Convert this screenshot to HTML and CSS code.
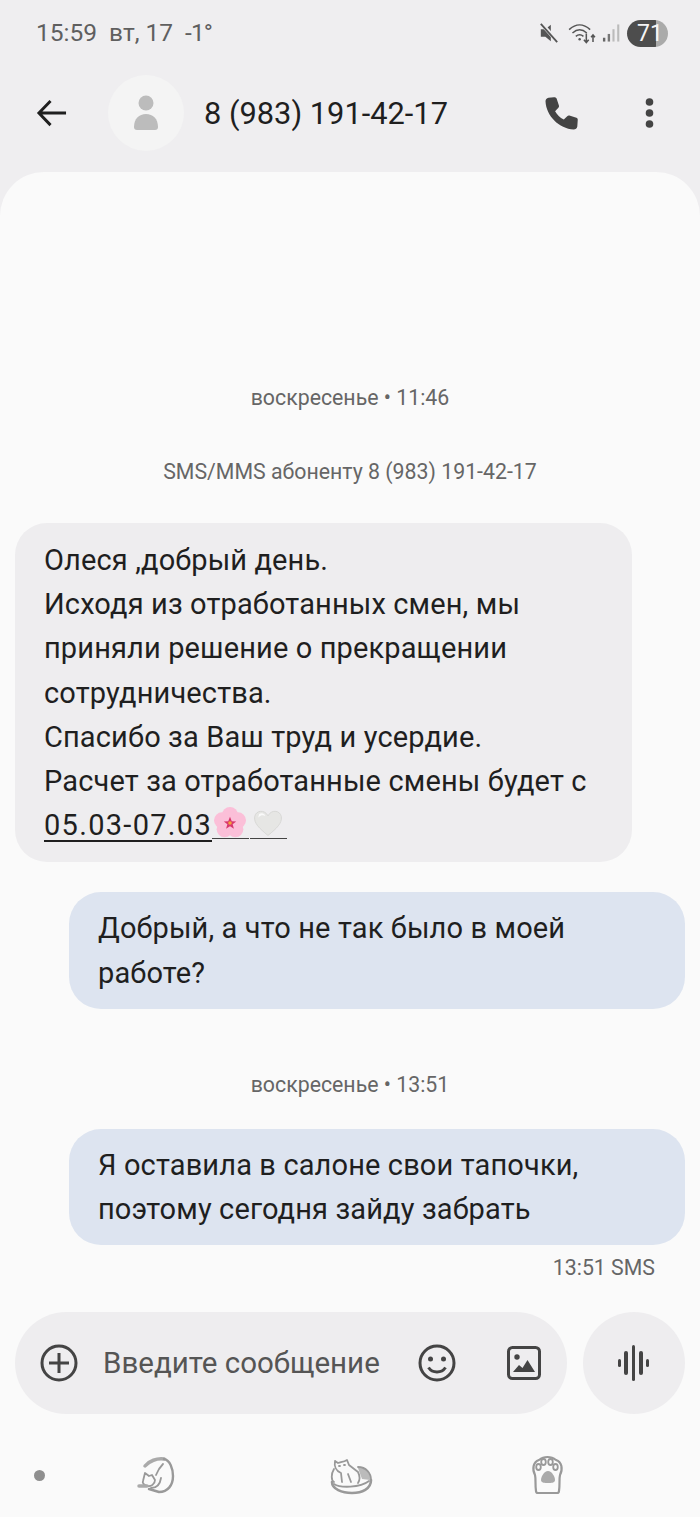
FILE: index.html
```html
<!DOCTYPE html>
<html lang="ru">
<head>
    <meta charset="UTF-8">
    <meta name="viewport" content="width=device-width, initial-scale=1.0">
    <title>8 (983) 191-42-17</title>
    <link rel="stylesheet" href="styles.css">
</head>
<body>
    <div class="phone">
        <div class="status">
            <div class="status-left">
                <span class="clock">15:59</span>
                <span class="date">вт, 17</span>
                <span class="temp">-1°</span>
            </div>
            <div class="status-right">
                <svg class="ic-mute" viewBox="0 0 22 22"><path d="M2 7h5l6-5v18l-6-5H2z" fill="#555"/><path d="M3 1l17 19" stroke="#efeef0" stroke-width="4.5"/><path d="M2 1l18 20" stroke="#555" stroke-width="2"/></svg>
                <svg class="ic-wifi" viewBox="0 0 30 22" fill="none" stroke="#555" stroke-width="1.6"><path d="M1 7c7-6.500 15-6.500 22 0M4.500 10.500c5-4.500 10-4.500 15 0M8 14c3-2.500 5-2.500 8 0"/><circle cx="12" cy="17" r="1.300" fill="#555" stroke="none"/><path d="M19 11v9M16.500 17.500l2.500 3 2.500-3M26 20v-7M24 15l2-2.500 2 2.500"/></svg>
                <svg class="ic-signal" viewBox="0 0 20 20"><rect x="1" y="15" width="2.500" height="4" fill="#666"/><rect x="6" y="11" width="2.500" height="8" fill="#777"/><rect x="11" y="6" width="2.200" height="13" fill="#bbb"/><rect x="16" y="1" width="2.200" height="18" fill="#bbb"/></svg>
                <div class="battery"><span>71</span></div>
            </div>
        </div>

        <header class="topbar">
            <svg class="ic-back" viewBox="0 0 32 32" fill="none" stroke="#1f1f1f" stroke-width="3"><path d="M31 15.500H3M15 3L3 15.500 15 28"/></svg>
            <div class="avatar">
                <svg viewBox="0 0 26 36" width="26" height="36" fill="#bcbcbc"><circle cx="13" cy="8" r="7.500"/><path d="M1 32c0-8 5-13 12-13s12 5 12 13c0 2-1 3-3 3H4c-2 0-3-1-3-3z"/></svg>
            </div>
            <div class="title">8 (983) 191-42-17</div>
            <svg class="ic-phone" viewBox="0 0 24 24"><path fill="#444" d="M6.600 1.500L3 1.800C1.800 2 1 3 1 4.200 1.500 14 10 22.500 19.800 23c1.200 0 2.200-.8 2.400-2l.3-4.500c0-.6-.3-1.100-.9-1.300l-4.700-1.500c-.5-.1-1 0-1.400.4l-2.300 2.300C10.500 15 8.800 13.300 7.400 10.800l2.200-2.300c.4-.4.500-.9.400-1.400L8.400 2.400c-.2-.6-1.100-.9-1.800-.9z"/></svg>
            <svg class="ic-more" viewBox="0 0 8 32" fill="#444"><circle cx="4" cy="5" r="3.800"/><circle cx="4" cy="16" r="3.800"/><circle cx="4" cy="27" r="3.800"/></svg>
        </header>

        <main class="sheet">
            <div class="meta meta-first">воскресенье • 11:46</div>
            <div class="meta meta-sms">SMS/MMS абоненту 8 (983) 191-42-17</div>

            <div class="bubble incoming">Олеся ,добрый день.<br>Исходя из отработанных смен, мы приняли решение о прекращении сотрудничества.<br>Спасибо за Ваш труд и усердие.<br>Расчет за отработанные смены будет с <span class="link">05.03-07.03</span><span class="emoji"><svg viewBox="0 0 36 36" width="36" height="32"><g fill="#fbbfd8"><circle cx="18" cy="9" r="9"/><circle cx="27" cy="15" r="9"/><circle cx="24" cy="25" r="9"/><circle cx="12" cy="25" r="9"/><circle cx="9" cy="15" r="9"/></g><path fill="#d8386e" d="M18 11l2 5 5 .3-4 3.200 1.400 5-4.400-2.800-4.400 2.800 1.400-5-4-3.200 5-.3z"/><circle cx="18" cy="18" r="2" fill="#f4a53a"/></svg></span><span class="emoji"><svg viewBox="0 0 36 36" width="36" height="32"><path fill="#e6e6e4" stroke="#d5d5d3" d="M18 32C8 24 2 18 3 11c1-7 11-9 15-1 4-8 14-6 15 1 1 7-5 13-15 21z"/><path fill="#fafafa" d="M8 8c3-2 6-1 7 2-3-1-5-1-8 2z"/></svg></span></div>

            <div class="bubble outgoing bubble-second">Добрый, а что не так было в моей работе?</div>

            <div class="meta meta-second">воскресенье • 13:51</div>

            <div class="bubble outgoing">Я оставила в салоне свои тапочки, поэтому сегодня зайду забрать</div>
            <div class="sent">13:51 SMS</div>

            <div class="composer">
                <div class="input-pill">
                    <svg class="ic-24" viewBox="0 0 38 38" fill="none" stroke="#444" stroke-width="3"><circle cx="19" cy="19" r="17"/><path d="M19 9v20M9 19h20"/></svg>
                    <span class="placeholder">Введите сообщение</span>
                    <svg class="ic-24 ic-smile" viewBox="0 0 38 38" fill="none" stroke="#444" stroke-width="3"><circle cx="19" cy="19" r="17"/><circle cx="12.500" cy="15" r="2.500" fill="#444" stroke="none"/><circle cx="25.500" cy="15" r="2.500" fill="#444" stroke="none"/><path d="M10.500 23.500c4 6 13 6 17 0"/></svg>
                    <svg class="ic-24 ic-image" viewBox="0 0 34 34" fill="none"><rect x="1.500" y="1.500" width="31" height="31" rx="4" stroke="#444" stroke-width="3"/><circle cx="10" cy="11" r="2.700" fill="#444"/><path fill="#444" d="M6 26l6-7 3.500 3 5-8 7.500 12z"/></svg>
                </div>
                <div class="voice">
                    <svg viewBox="0 0 32 36" width="32" height="36" fill="#444"><rect x="0" y="14" width="3" height="8" rx="1.500"/><rect x="6" y="6" width="4" height="24" rx="2"/><rect x="14" y="0" width="3" height="36" rx="1.500"/><rect x="21" y="6" width="4" height="24" rx="2"/><rect x="28" y="14" width="3" height="8" rx="1.500"/></svg>
                </div>
            </div>

            <nav class="navbar">
                <span class="nav-dot"></span>
                <svg class="nav-cat" viewBox="0 0 60 60" fill="none" stroke="#999" stroke-width="1.800" stroke-linecap="round" stroke-linejoin="round">
                    <path d="M20 21C24 16 32 13 39 14" stroke="#aaa" stroke-width="3.500"/>
                    <path d="M39 14C45 15 48 24 48 31 48 40 43 47 34 47L24 44" stroke-width="2.400"/>
                    <path d="M38 19C35 22 33 25 31 30"/>
                    <path d="M18 36L20 28 24 31 27 30 30 35C30 39 26 42 22 41 19 40 17 38 18 36z"/>
                    <path d="M14 41H22" stroke="#aaa" stroke-width="3.500"/>
                    <path d="M26 43C31 43 35 40 36 33"/>
                </svg>
                <svg class="nav-bed" viewBox="0 0 60 50" fill="none" stroke="#999" stroke-width="1.800" stroke-linecap="round" stroke-linejoin="round">
                    <path d="M36 18C44 17 49 23 48 30L40 29z" fill="#bbb" stroke="none"/>
                    <path d="M12 19C9 24 9 30 12 32M36 17C44 17 49 23 49 30"/>
                    <path d="M10 32C10 39 20 43 30 43S49 39 49 30" stroke="#999" stroke-width="2.600"/>
                    <path d="M12 34C18 38 38 38 47 31"/>
                    <path d="M13 11L16 13C19 12 22 12 25 10L27 15 36 22C38 26 38 30 36 33M13 11C12 16 14 21 19 23L20 32M26 24L29 32"/>
                    <path d="M17 16H18M22 15H23"/>
                </svg>
                <svg class="nav-paw" viewBox="0 0 60 60" fill="none" stroke="#999" stroke-width="2.200" stroke-linecap="round" stroke-linejoin="round">
                    <path d="M16 46C15 40 16 34 15 30 12 24 13 17 19 15 24 11 31 11 36 15 42 17 43 24 40 30 39 34 40 40 39 46 39 47.500 38 48 37 48H18C17 48 16 47.500 16 46z"/>
                    <ellipse cx="18.500" cy="22" rx="2.300" ry="3" stroke-width="1.800"/>
                    <ellipse cx="23.500" cy="17" rx="2.300" ry="3" stroke-width="1.800"/>
                    <ellipse cx="30.500" cy="17" rx="2.300" ry="3" stroke-width="1.800"/>
                    <ellipse cx="35.500" cy="22" rx="2.300" ry="3" stroke-width="1.800"/>
                    <path d="M28 26C32 26 35 32 35 35 35 38 31 38 28 38S21 38 21 35C21 32 24 26 28 26z" fill="#aaa" stroke="none"/>
                </svg>
            </nav>
        </main>
    </div>
</body>
</html>
```

FILE: styles.css
```css
* {
    box-sizing: border-box;
}
html, body {
    margin: 0;
    padding: 0;
}
body {
    font-family: Roboto, "Noto Sans", sans-serif;
    background-color: #efeef0;
    color: #1f1f1f;
}
.phone {
    width: 700px;
    height: 1517px;
    display: flex;
    flex-direction: column;
    overflow: hidden;
}

/* status bar */
.status {
    height: 64px;
    padding: 18px 32px 0 36px;
    display: flex;
    justify-content: space-between;
    align-items: flex-start;
}
.status-left {
    display: flex;
    color: #5f5f5f;
    font-size: 24.500px;
    line-height: 30px;
}
.clock {
    margin-right: 12px;
}
.date {
    margin-right: 12px;
}
.temp {
    letter-spacing: -1px;
}
.status-right {
    display: flex;
    align-items: center;
    height: 30px;
}
.ic-mute {
    width: 20px;
    height: 20px;
    margin-right: 9px;
}
.ic-wifi {
    width: 29px;
    height: 21px;
    margin-right: 5px;
}
.ic-signal {
    width: 19px;
    height: 20px;
    margin-right: 6px;
}
.battery {
    width: 41px;
    height: 27px;
    border-radius: 14px;
    background: linear-gradient(to right, #4d4d4d 29px, #aaaaaa 29px);
    color: #f5f5f5;
    font-size: 23px;
    line-height: 27px;
    padding-left: 10px;
}

/* header */
.topbar {
    height: 108px;
    flex: none;
    display: flex;
    align-items: flex-start;
    padding: 11px 0 0 36px;
}
.ic-back {
    width: 31px;
    height: 31px;
    margin-top: 23px;
    margin-right: 41px;
}
.avatar {
    width: 76px;
    height: 76px;
    border-radius: 50%;
    background-color: #f4f4f4;
    display: flex;
    align-items: center;
    justify-content: center;
    margin-right: 20px;
}
.title {
    font-size: 30.800px;
    line-height: 78px;
    width: 340px;
}
.ic-phone {
    width: 36px;
    height: 36px;
    margin-top: 20px;
    margin-right: 65px;
}
.ic-more {
    width: 9px;
    height: 32px;
    margin-top: 22px;
}

/* message list */
.sheet {
    flex: 1;
    background-color: #fafafa;
    border-radius: 44px 44px 0 0;
    padding: 0 15px;
}
.meta {
    text-align: center;
    color: #666;
    font-size: 21.300px;
    line-height: 26px;
}
.meta-first {
    padding-top: 213px;
}
.meta-sms {
    margin-top: 48px;
    margin-bottom: 38px;
}
.meta-second {
    margin-top: 63px;
    margin-bottom: 31px;
}
.bubble {
    font-size: 29px;
    letter-spacing: .13px;
    line-height: 44.200px;
    border-radius: 32px;
    padding: 15px 29px 15px;
}
.incoming {
    width: 617px;
    background-color: #eeedef;
    border-radius: 32px;
}
.outgoing {
    width: 616px;
    margin-left: 54px;
    background-color: #dde4f0;
    padding-top: 14px;
    padding-bottom: 14px;
}
.bubble-second {
    margin-top: 30px;
}
.link {
    letter-spacing: 1.300px;
    text-decoration: underline;
    text-decoration-thickness: 2px;
    text-underline-offset: 5px;
}
.emoji {
    display: inline-block;
    width: 37px;
    height: 32px;
    border-bottom: 1px solid #444;
    vertical-align: -4px;
    margin-right: 1px;
}
.emoji svg {
    display: block;
}
.sent {
    text-align: right;
    font-size: 21.300px;
    line-height: 26px;
    color: #666;
    margin-top: 10px;
    padding-right: 30px;
}

/* composer */
.composer {
    display: flex;
    gap: 16px;
    margin-top: 31px;
}
.input-pill {
    width: 552px;
    height: 102px;
    border-radius: 51px;
    background-color: #eeedef;
    display: flex;
    align-items: center;
    padding-left: 25px;
}
.ic-24 {
    width: 38px;
    height: 38px;
    flex: none;
}
.placeholder {
    font-size: 29.500px;
    color: #555;
    margin-left: 25px;
    width: 315px;
    flex: none;
}
.ic-smile {
    margin-right: 51px;
}
.ic-image {
    width: 34px;
    height: 34px;
}
.voice {
    width: 102px;
    height: 102px;
    border-radius: 50%;
    background-color: #eeedef;
    display: flex;
    align-items: center;
    justify-content: center;
}

/* bottom nav */
.navbar {
    display: flex;
    align-items: center;
    height: 60px;
    margin-top: 31px;
}
.nav-dot {
    width: 11px;
    height: 11px;
    border-radius: 50%;
    background-color: #8f8f8f;
    margin-left: 19px;
    margin-right: 80px;
}
.nav-cat {
    width: 60px;
    height: 60px;
    margin-right: 137px;
}
.nav-bed {
    width: 60px;
    height: 50px;
    margin-right: 138px;
}
.nav-paw {
    width: 60px;
    height: 60px;
}
```
